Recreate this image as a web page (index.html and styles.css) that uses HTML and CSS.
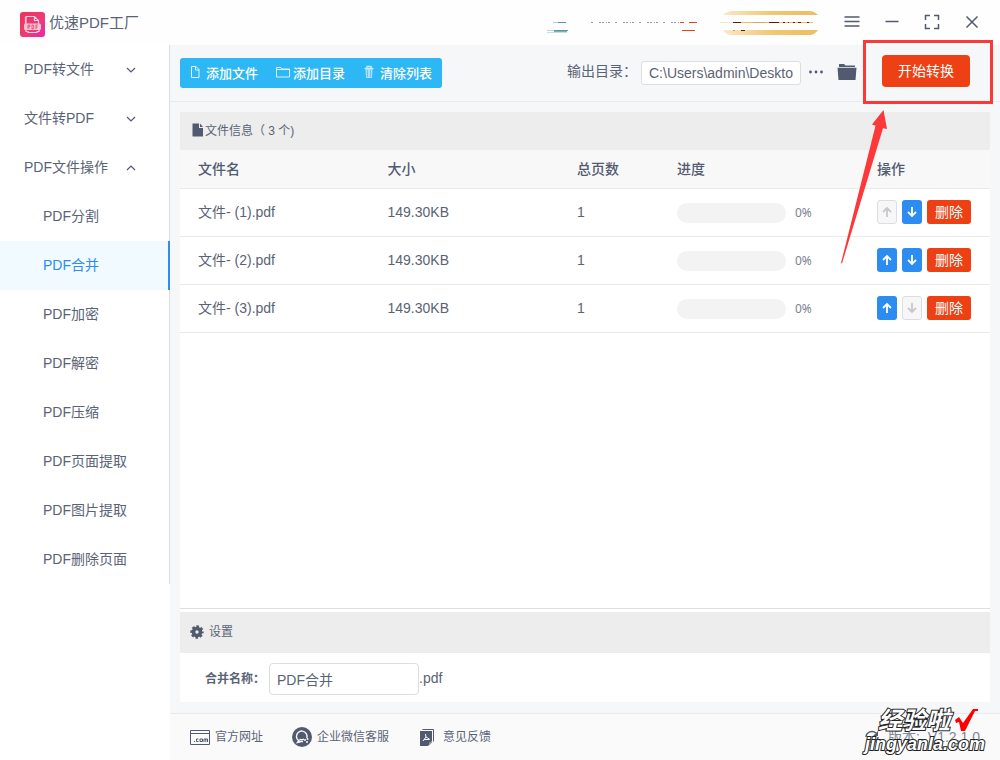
FILE: index.html
```html
<!DOCTYPE html>
<html lang="zh-CN">
<head>
<meta charset="utf-8">
<title>优速PDF工厂</title>
<link rel="stylesheet" href="styles.css">
</head>
<body>
<div class="app">
  <header class="titlebar">
    <svg class="logo" viewBox="0 0 25 25" aria-hidden="true">
      <defs><linearGradient id="lg" x1="0" y1="0" x2="1" y2="1"><stop offset="0" stop-color="#ee3358"/><stop offset=".6" stop-color="#ee3a78"/><stop offset="1" stop-color="#ec25b0"/></linearGradient></defs>
      <rect width="25" height="25" rx="3" fill="url(#lg)"/>
      <path d="M5.500 12V5.500h0V12M6 12V4.500h8.500l4 4V12M14.500 4.500v4h4M6 18v1.500h2v1h9v-1h2V18" fill="none" stroke="#fbd0dc" stroke-width="1.200"/>
      <rect x="4" y="11.500" width="17" height="6.500" rx="1.500" fill="#f8c4d0"/>
      <path d="M8 17v-4h1.800v2H8M12 13h1l.8 1v2l-.8 1h-1zM16 17v-4h2M16 15h1.500" fill="none" stroke="#e93a6b" stroke-width=".8"/>
    </svg>
    <h1 class="app-name">优速PDF工厂</h1>
    <svg class="promo" viewBox="0 0 280 25" aria-hidden="true">
      <defs><linearGradient id="gold"><stop offset="0" stop-color="#fbe8c5"/><stop offset=".5" stop-color="#f1c873"/><stop offset="1" stop-color="#edbd60"/></linearGradient></defs>
      <path d="M7 11.500h12" stroke="#b4cdd0"/><path d="M12 11.500h8" stroke="#5f9298"/>
      <path d="M1 19.500h21" stroke="#5b9ba0"/><path d="M1 19.500h7" stroke="#bad5d7"/><path d="M1 21.500h20" stroke="#c5dfe1"/><path d="M8 20.500h13" stroke="#7db2b5"/>
      <path d="M45 11.500h88" stroke="#9499a8" stroke-dasharray="2 6 2 1 2 2 1 1 2 5"/>
      <path d="M134 11.500h4M143 11.500h8M136 19.500h13" stroke="#ed4014"/>
      <path d="M177 4c3-3 6-4 9-4h77c4 0 7 2 9 4z" fill="url(#gold)"/>
      <path d="M177 19h95c-2 3-5 5-9 5h-77c-4 0-7-2-9-5z" fill="url(#gold)"/>
      <path d="M174 11.500h14" stroke="#fae6c2"/><path d="M188 11.500h79" stroke="#edbd60"/>
      <path d="M187 11.500h8M223 11.500h10M237 11.500h2M242 11.500h1M247 11.500h2M252 11.500h3M261 11.500h2M195 19.500h4" stroke="#5c1a12"/>
      <path d="M207 11.500h13M187 19.500h2" stroke="#d0a66c"/>
    </svg>
    <div class="window-tools">
      <button class="icon-btn" aria-label="菜单"><svg viewBox="0 0 20 20"><path d="M2.500 5h15M2.500 9.500h15M2.500 14h15"/></svg></button>
      <button class="icon-btn" aria-label="最小化"><svg viewBox="0 0 20 20"><path d="M3.500 9.500h13"/></svg></button>
      <button class="icon-btn" aria-label="最大化"><svg viewBox="0 0 20 20"><path d="M8 3.500H3.500V8M12 3.500h4.500V8M8 16.500H3.500V12M12 16.500h4.500V12"/></svg></button>
      <button class="icon-btn" aria-label="关闭"><svg viewBox="0 0 20 20"><path d="M4.500 4.500l11 11M15.500 4.500l-11 11"/></svg></button>
    </div>
  </header>

  <nav class="sidebar">
    <button class="group">PDF转文件<svg viewBox="0 0 10 10"><path d="M1 3l4 4 4-4"/></svg></button>
    <button class="group">文件转PDF<svg viewBox="0 0 10 10"><path d="M1 3l4 4 4-4"/></svg></button>
    <button class="group">PDF文件操作<svg viewBox="0 0 10 10"><path d="M1 7l4-4 4 4"/></svg></button>
    <a class="item" href="#">PDF分割</a>
    <a class="item active" href="#">PDF合并</a>
    <a class="item" href="#">PDF加密</a>
    <a class="item" href="#">PDF解密</a>
    <a class="item" href="#">PDF压缩</a>
    <a class="item" href="#">PDF页面提取</a>
    <a class="item" href="#">PDF图片提取</a>
    <a class="item" href="#">PDF删除页面</a>
  </nav>

  <main class="main">
    <div class="toolbar">
      <div class="actions">
        <button class="action"><svg viewBox="0 0 14 14"><path d="M2.500 1.500h4.500l3 3v8H2.500zM6.500 1.500V5H10" fill="none" stroke="#fff" stroke-opacity=".85"/></svg>添加文件</button>
        <button class="action"><svg viewBox="0 0 14 14"><path d="M.5 12V2.500h4.500l1 1.500h7.500v8zM.5 4.500h13" fill="none" stroke="#fff" stroke-opacity=".8"/></svg>添加目录</button>
        <button class="action"><svg viewBox="0 0 14 14"><path d="M4 3V1.500h4V3M1.500 3.500h9" fill="none" stroke="#bfe8fd" stroke-width="1.500"/><path d="M2.500 4h7L9 13H3z" fill="#a9e0fc"/><path d="M4.500 5v7M7.500 5v7" stroke="#5cc8f8"/></svg>清除列表</button>
      </div>
      <div class="output">
        <label for="out">输出目录：</label>
        <input id="out" class="path" type="text" value="C:\Users\admin\Desktop">
        <button class="more" aria-label="更多"><svg viewBox="0 0 16 16"><circle cx="2.500" cy="8" r="1.400"/><circle cx="8" cy="8" r="1.400"/><circle cx="13.500" cy="8" r="1.400"/></svg></button>
        <button class="folder" aria-label="打开目录"><svg viewBox="0 0 20 18"><path d="M2 4V1.500q0-.5.5-.5H7l1.500 1.500h9q.5 0 .5.500V4z"/><path d="M.5 4.800h19L18.500 17h-17z"/></svg></button>
        <button class="start">开始转换</button>
      </div>
    </div>

    <div class="content">
      <section class="files">
        <h2 class="bar"><svg class="doc" viewBox="0 0 12 14"><path d="M.5.500H7v4.500h4v8q0 .5-.5.500h-9.500Q.5 13.500.5 13zM8 .5L11 4H8z"/></svg>文件信息（ 3 个)</h2>
        <table class="table">
          <colgroup><col><col><col class="c-pages"><col class="c-progress"><col class="c-ops"></colgroup>
          <thead><tr><th>文件名</th><th>大小</th><th>总页数</th><th>进度</th><th>操作</th></tr></thead>
          <tbody>
            <tr><td>文件- (1).pdf</td><td>149.30KB</td><td>1</td>
              <td><div class="progress"><span class="track"></span><span class="pct">0%</span></div></td>
              <td><div class="ops"><button class="move" disabled aria-label="上移"><svg viewBox="0 0 12 12"><path d="M6 11V2M2 6l4-4 4 4"/></svg></button><button class="move" aria-label="下移"><svg viewBox="0 0 12 12"><path d="M6 1v9M2 6l4 4 4-4"/></svg></button><button class="delete">删除</button></div></td></tr>
            <tr><td>文件- (2).pdf</td><td>149.30KB</td><td>1</td>
              <td><div class="progress"><span class="track"></span><span class="pct">0%</span></div></td>
              <td><div class="ops"><button class="move" aria-label="上移"><svg viewBox="0 0 12 12"><path d="M6 11V2M2 6l4-4 4 4"/></svg></button><button class="move" aria-label="下移"><svg viewBox="0 0 12 12"><path d="M6 1v9M2 6l4 4 4-4"/></svg></button><button class="delete">删除</button></div></td></tr>
            <tr><td>文件- (3).pdf</td><td>149.30KB</td><td>1</td>
              <td><div class="progress"><span class="track"></span><span class="pct">0%</span></div></td>
              <td><div class="ops"><button class="move" aria-label="上移"><svg viewBox="0 0 12 12"><path d="M6 11V2M2 6l4-4 4 4"/></svg></button><button class="move" disabled aria-label="下移"><svg viewBox="0 0 12 12"><path d="M6 1v9M2 6l4 4 4-4"/></svg></button><button class="delete">删除</button></div></td></tr>
          </tbody>
        </table>
      </section>
      <section class="settings">
        <h2 class="bar settings-bar"><svg class="gear" viewBox="0 0 14 14"><circle cx="7" cy="7" r="3.500" fill="none" stroke="#515a6e" stroke-width="3.600"/><circle cx="7" cy="7" r="5.500" fill="none" stroke="#515a6e" stroke-width="2.400" stroke-dasharray="2.600 1.720" stroke-dashoffset="1.300"/></svg>设置</h2>
        <div class="form">
          <label for="name">合并名称：</label>
          <input id="name" class="name" type="text" value="PDF合并"><span class="ext">.pdf</span>
        </div>
      </section>
    </div>

    <footer class="footer">
      <a class="foot-link site" href="#"><svg viewBox="0 0 20 20"><path d="M.5 3.500h19v14H.5zM.5 6.500h19" fill="none" stroke="#515a6e"/><path d="M4 14.500h1M8.500 12h-2v2.500h2M10 12h2.500v2.500H10zM14 15v-3h3.500v3M15.800 12v3" fill="none" stroke="#515a6e"/></svg>官方网址</a>
      <a class="foot-link chat" href="#"><svg viewBox="0 0 20 20"><circle cx="10" cy="10" r="10" fill="#515a6e"/><path d="M14.800 11A5.300 5.300 0 1 0 11 14.500M7 13.500L5.500 15.500l3-.6M7.500 12c1.500 1 3 1 4.500 0" fill="none" stroke="#fafafa" stroke-width="1.400"/><circle cx="13" cy="13" r="1" fill="#fafafa"/><circle cx="15.500" cy="12" r="1" fill="#fafafa"/><circle cx="15" cy="15" r="1" fill="#fafafa"/></svg>企业微信客服</a>
      <a class="foot-link feedback" href="#"><svg viewBox="0 0 20 20"><path d="M4.500 2.500h11v12" fill="none" stroke="#515a6e"/><path d="M2 4h12v10l-4 5H2z" fill="#515a6e"/><path d="M11 18.500v-3.500h3.500z" fill="#8d94a3"/><path d="M7.500 7l.5 3-3 4M8 10l4 2.500M6 12.500h5" fill="none" stroke="#fafafa"/></svg>意见反馈</a>
      <span class="version"><svg viewBox="0 0 16 16"><path d="M2 8a6 6 0 0 1 10-4M14 8a6 6 0 0 1-10 4" fill="none" stroke="#515a6e" stroke-width="1.500"/><path d="M14 2v5H9z" fill="#515a6e"/></svg>版本: <b>V1.2.1.0</b></span>
    </footer>
  </main>

  <div class="highlight" aria-hidden="true"></div>
  <svg class="arrow" viewBox="0 0 50 160" aria-hidden="true"><path d="M43.500 10L47 29l-4-.8L2 163.500l-1-.5L35.500 25.800 32 24.500z" fill="#fd3838"/></svg>
  <div class="watermark">
    <div class="mark-top"><span class="mark-cn">经验啦</span><svg viewBox="0 0 24 26" aria-hidden="true"><path d="M0 12l4-3 4 6L18 1h5v2h-3L10 23H6L4 14l-3 1z" fill="#f00"/></svg></div>
    <div class="mark-url">jingyanla.com</div>
  </div>
</div>
</body>
</html>
```
FILE: styles.css
```css
* { box-sizing: border-box; }
body, h1, h2 { margin: 0; }
body, button, input {
  font-family: "Liberation Sans", "Noto Sans CJK SC", sans-serif;
  font-size: 14px;
  font-weight: 400;
  color: #5a6376;
}
body { line-height: 20px; }
button { border: 0; padding: 0; background: none; }
a { color: inherit; text-decoration: none; }
svg { flex: none; }

.app {
  position: relative;
  display: grid;
  grid-template: auto 1fr / 170px 1fr;
  min-height: 100vh;
  overflow: hidden;
  background: #fff;
}

.titlebar {
  grid-column: 1 / -1;
  display: flex;
  align-items: center;
  height: 45px;
  padding: 0 18px 0 20px;
  background: #fefefe;
}
.logo { width: 25px; height: 25px; margin-top: 4px; }
.app-name { margin-left: 4px; font-size: 15px; font-weight: 400; }
.promo { width: 280px; height: 25px; margin: 2px 0 0 auto; }
.window-tools { display: flex; gap: 20px; margin: 0 0 1px 16px; }
.icon-btn { width: 20px; height: 20px; }
.icon-btn svg { display: block; width: 20px; height: 20px; fill: none; stroke: #515a6e; stroke-width: 1.500; }

.sidebar {
  align-self: start;
  display: flex;
  flex-direction: column;
  border-right: 1px solid #dcdee2;
}
.group, .item { display: flex; align-items: center; height: 49px; padding-bottom: 2px; }
.group { justify-content: space-between; padding: 0 33px 3px 24px; }
.group svg { width: 10px; height: 10px; margin-top: 3px; fill: none; stroke: #515a6e; stroke-width: 1.200; }
.item { padding-left: 43px; }
.item.active { margin-right: -1px; color: #2d8cf0; background: #f0faff; border-right: 2px solid #2d8cf0; }

.main { display: flex; flex-direction: column; min-width: 0; background: #f5f7f9; }
.toolbar {
  display: flex;
  align-items: center;
  justify-content: space-between;
  height: 57px;
  padding: 0 30px 0 10px;
  border-bottom: 1px solid #e8eaec;
}
.actions { display: flex; gap: 18px; height: 30px; padding: 0 10px 2px 9px; border-radius: 3px; background: #2db7f5; }
.action { display: flex; align-items: center; gap: 3px; font-size: 13px; color: #fff; font-weight: 500; }
.action svg { width: 14px; height: 14px; }
.output { display: flex; align-items: center; }
.output label { padding-bottom: 4px; }
.path { width: 160px; height: 24px; margin-left: 4px; padding: 0 7px; border: 1px solid #dcdee2; border-radius: 3px; background: #fff; }
.more { width: 16px; height: 16px; margin: 0 0 3px 7px; }
.folder { width: 20px; height: 18px; margin: 0 0 3px 13px; }
.more svg, .folder svg { display: block; fill: #515a6e; }
.start { width: 88px; height: 32px; margin: 0 0 4px 25px; padding-bottom: 2px; border-radius: 4px; background: #ed4014; color: #fff; }

.content { flex: 1; display: flex; flex-direction: column; padding: 10px 10px 11px; }
.files { flex: 1; background: #fff; border-bottom: 1px solid #dcdee2; }
.bar { display: flex; align-items: center; height: 38px; padding: 0 12px; background: #ededed; font-size: 12px; font-weight: 400; }
.doc { width: 12px; height: 14px; margin: 0 1px 2px 0; }
.doc path { fill: #515a6e; }
.table { width: 100%; table-layout: fixed; border-collapse: separate; border-spacing: 0; }
.c-pages { width: 100px; }
.c-progress { width: 200px; }
.c-ops { width: 131px; }
.table th, .table td { padding: 0 0 0 18px; border-bottom: 1px solid #e8eaec; text-align: left; }
.table th { height: 39px; background: #f8f8f9; color: #515a6e; font-weight: 500; }
.table td { height: 48px; padding-bottom: 2px; }
.progress { display: flex; align-items: center; gap: 9px; padding-top: 2px; }
.track { width: 109px; height: 20px; border-radius: 10px; background: #f3f3f3; }
.pct { font-family: "Noto Sans", sans-serif; font-size: 12px; color: #7a8090; }
.ops { display: flex; gap: 5px; }
.move { display: grid; place-items: center; width: 20px; height: 24px; border-radius: 3px; background: #2d8cf0; }
.move svg { width: 12px; height: 12px; fill: none; stroke: #fff; stroke-width: 1.800; }
.move:disabled { border: 1px solid #dcdee2; background: #f7f7f7; }
.move:disabled svg { stroke: #c5c8ce; }
.delete { width: 44px; height: 24px; padding-bottom: 2px; border-radius: 3px; background: #ed4014; color: #fff; }

.settings { padding-top: 3px; background: #fff; }
.settings-bar { height: 41px; padding: 0 10px 2px; }
.gear { width: 14px; height: 14px; margin-right: 5px; }
.form { display: flex; align-items: center; height: 49px; padding: 2px 25px 0; }
.form label { width: 64px; font-size: 12px; font-weight: 600; }
.name { width: 150px; height: 32px; padding: 0 7px; border: 1px solid #dcdee2; border-radius: 4px; background: #fff; }
.ext { padding-bottom: 2px; }

.footer { display: flex; align-items: center; height: 47px; padding: 0 20px; border-top: 1px solid #e8eaec; background: #fafafa; font-size: 12px; }
.foot-link { display: flex; align-items: center; gap: 5px; margin-right: 29px; }
.foot-link svg { width: 20px; height: 20px; }
.version { display: flex; align-items: center; gap: 8px; margin-left: auto; font-size: 14px; color: #808695; }
.version svg { width: 16px; height: 16px; }
.version b { font-size: 14px; font-weight: 400; }

.highlight { position: absolute; top: 40px; right: 7px; width: 130px; height: 64px; border: 3px solid #fd3838; }
.arrow { position: absolute; top: 100px; right: 110px; width: 50px; height: 160px; overflow: visible; }
.watermark {
  position: absolute;
  right: 15px;
  bottom: 6px;
  color: #fff;
  font-style: italic;
  font-weight: 700;
  -webkit-text-stroke: 2px #222;
  paint-order: stroke fill;
}
.mark-top { display: flex; align-items: center; justify-content: flex-end; gap: 5px; padding-right: 6px; }
.mark-cn { font-size: 24px; line-height: 24px; }
.mark-top svg { width: 24px; height: 26px; }
.mark-url { font-size: 18px; line-height: 20px; text-align: right; }
```
